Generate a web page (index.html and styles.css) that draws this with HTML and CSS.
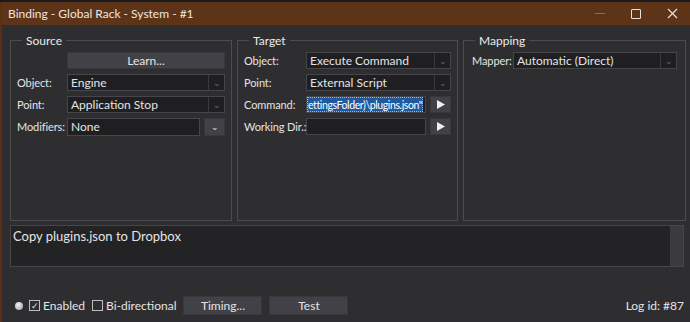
FILE: index.html
```html
<!DOCTYPE html>
<html lang="en">
<head>
  <meta charset="UTF-8">
  <title>Binding - Global Rack - System - #1</title>
  <link rel="stylesheet" href="styles.css">
</head>
<body>
  <div class="window">
    <div class="titlebar">
      <span class="title">Binding - Global Rack - System - #1</span>
      <div class="win-btns">
        <span class="win-btn min"></span>
        <span class="win-btn max"><span class="max-box"></span></span>
        <span class="win-btn close">
          <svg width="11" height="11" viewBox="0 0 11 11"><path d="M1 1 L10 10 M10 1 L1 10" stroke="#e8e0da" stroke-width="1.2"/></svg>
        </span>
      </div>
    </div>

    <div class="content">
      <div class="groups">
        <fieldset class="group source">
          <legend>Source</legend>
          <div class="rows">
            <span></span>
            <button class="btn">Learn...</button>
            <label>Object:</label>
            <div class="combo">Engine<span class="arrow">&#8964;</span></div>
            <label>Point:</label>
            <div class="combo">Application Stop<span class="arrow">&#8964;</span></div>
            <label>Modifiers:</label>
            <div class="split">
              <div class="field">None</div>
              <button class="btn small">&#8964;</button>
            </div>
          </div>
        </fieldset>

        <fieldset class="group target">
          <legend>Target</legend>
          <div class="rows">
            <label>Object:</label>
            <div class="combo">Execute Command<span class="arrow">&#8964;</span></div>
            <label>Point:</label>
            <div class="combo">External Script<span class="arrow">&#8964;</span></div>
            <label>Command:</label>
            <div class="split">
              <div class="field cmd"><span class="sel">ettingsFolder)\plugins.json"</span></div>
              <button class="btn small play"><svg width="8" height="9" viewBox="0 0 8 9"><path d="M0 0 L8 4.5 L0 9 Z" fill="#f0f0f0"/></svg></button>
            </div>
            <label>Working Dir.:</label>
            <div class="split">
              <div class="field"></div>
              <button class="btn small play"><svg width="8" height="9" viewBox="0 0 8 9"><path d="M0 0 L8 4.5 L0 9 Z" fill="#f0f0f0"/></svg></button>
            </div>
          </div>
        </fieldset>

        <fieldset class="group mapping">
          <legend>Mapping</legend>
          <div class="rows">
            <label>Mapper:</label>
            <div class="combo">Automatic (Direct)<span class="arrow">&#8964;</span></div>
          </div>
        </fieldset>
      </div>

      <div class="notes">
        <div class="notes-text">Copy plugins.json to Dropbox</div>
        <div class="scrollbar"></div>
      </div>

      <div class="footer">
        <span class="led"></span>
        <span class="check on">&#10003;</span>
        <span class="check-label">Enabled</span>
        <span class="check"></span>
        <span class="check-label">Bi-directional</span>
        <button class="btn wide">Timing...</button>
        <button class="btn wide">Test</button>
        <span class="log-id">Log id: #87</span>
      </div>
    </div>
  </div>
</body>
</html>
```

FILE: styles.css
```css
body {
  margin: 0;
  background: #1a1a1c;
  font-family: 'Lato', 'Open Sans', Arial, sans-serif;
  font-size: 12px;
  color: #e4e4e4;
}
.window {
  margin-top: 2px;
  height: 320px;
  border-left: 2px solid #5a2f16;
  background: #2e2e31;
  display: flex;
  flex-direction: column;
}
.titlebar {
  height: 23px;
  background: #5d3418;
  display: flex;
  align-items: center;
  justify-content: space-between;
  padding-left: 6px;
}
.title {
  font-size: 12px;
  color: #ece6e1;
}
.win-btns {
  display: flex;
  height: 100%;
}
.win-btn {
  width: 36px;
  display: flex;
  align-items: center;
  justify-content: center;
}
.win-btn.min::before {
  content: "";
  width: 10px;
  height: 1px;
  background: #8c6a54;
}
.max-box {
  width: 8px;
  height: 8px;
  border: 1.3px solid #e8e0da;
  border-radius: 1px;
}
.content {
  flex: 1;
  padding: 8px 6px 0 8px;
  display: flex;
  flex-direction: column;
}
.groups {
  display: grid;
  grid-template-columns: 222px 221px 223px;
  gap: 5px;
  height: 188px;
}
.group {
  margin: 0;
  border: 1px solid #4c4c50;
  padding: 4px 6px 0 6px;
  min-width: 0;
}
.group legend {
  padding: 0 4px;
  margin-left: 5px;
  font-size: 12px;
  color: #eaeaea;
}
.rows {
  display: grid;
  grid-template-columns: 50px minmax(0, 1fr);
  grid-auto-rows: 17px;
  row-gap: 5px;
  align-items: center;
}
.target .rows { grid-template-columns: 62px minmax(0, 1fr); }
.mapping .rows { grid-template-columns: 41px minmax(0, 1fr); padding-left: 2px; padding-right: 2px; }
.source .rows .split { height: 18px; }
label {
  white-space: nowrap;
  font-size: 11px;
  letter-spacing: -0.1px;
}
.combo, .field {
  height: 100%;
  box-sizing: border-box;
  background: #1f1f21;
  border: 1px solid #46464a;
  padding: 0 3px;
  display: flex;
  align-items: center;
  position: relative;
  overflow: hidden;
  white-space: nowrap;
}
.combo .arrow {
  position: absolute;
  right: 0;
  top: 0;
  bottom: 0;
  width: 15px;
  border-left: 1px solid #3a3a3e;
  color: #6a6a6e;
  font-size: 9px;
  display: flex;
  align-items: center;
  justify-content: center;
}
.split {
  display: flex;
  gap: 4px;
  height: 100%;
  min-width: 0;
}
.split .field { flex: 1; min-width: 0; }
.btn {
  font-family: inherit;
  font-size: 12px;
  color: #e4e4e4;
  background: #414147;
  border: 1px solid #38383c;
  height: 100%;
  padding: 0;
  margin: 0;
}
.btn.small {
  width: 21px;
  flex: none;
  font-size: 9px;
  display: flex;
  align-items: center;
  justify-content: center;
}
.field.cmd {
  padding: 0;
}
.sel {
  background: #1f5aa0;
  color: #fff;
  padding: 0 1px;
  height: 100%;
  display: flex;
  align-items: center;
  font-size: 10.5px;
  letter-spacing: -0.4px;
  outline: 1px dotted #9ab6d8;
  outline-offset: -1px;
}
.notes {
  margin-top: 4px;
  height: 40px;
  border: 1px solid #46464a;
  background: #232325;
  display: flex;
}
.notes-text {
  flex: 1;
  padding: 2px 2px;
  font-size: 13px;
}
.scrollbar {
  width: 13px;
  background: #3b3b3f;
}
.footer {
  margin-top: 29px;
  height: 19px;
  display: flex;
  align-items: center;
  padding-left: 5px;
}
.led {
  width: 8px;
  height: 8px;
  border-radius: 50%;
  background: radial-gradient(circle at 40% 35%, #f4f4f4, #9a9a9a);
  margin-right: 6px;
}
.check {
  width: 9px;
  height: 9px;
  border: 1px solid #bdbdbd;
  font-size: 9px;
  line-height: 9px;
  text-align: center;
  color: #e4e4e4;
}
.check-label {
  margin-left: 3px;
  margin-right: 7px;
  font-size: 12px;
}
.btn.wide {
  width: 79px;
  height: 19px;
  margin-right: 7px;
}
.log-id {
  margin-left: auto;
  font-size: 12px;
}
```
